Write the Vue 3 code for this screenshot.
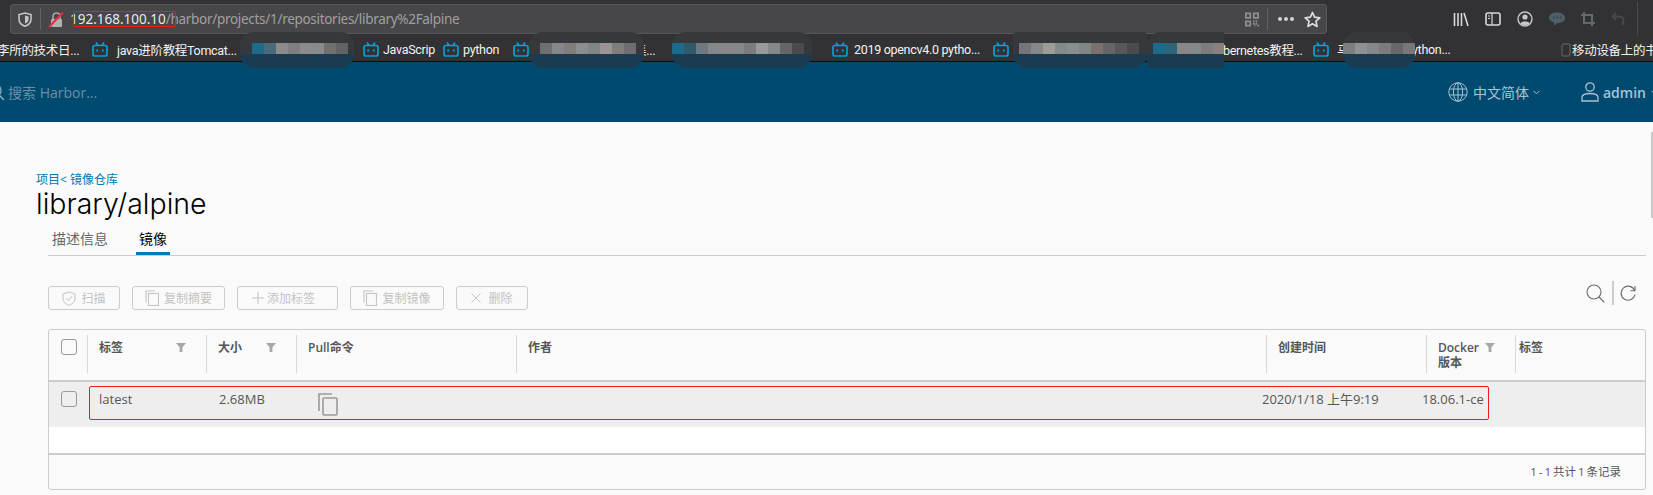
<script setup>
const bookmarks = [
  { width: 92, text: '李所的技术日...', plain: true, shift: true },
  { width: 160, text: 'java进阶教程Tomcat...', gap: 9 },
  { width: 111, text: '' },
  { width: 80, text: 'JavaScrip', gap: 4 },
  { width: 70, text: 'python', gap: 4 },
  { width: 159, text: '', tail: '集...', tailLeft: 121 },
  { width: 160, text: '' },
  { width: 161, text: '2019 opencv4.0 pytho...', gap: 6 },
  { width: 160, text: '' },
  { width: 160, text: '', tail: 'bernetes教程...', tailLeft: 70 },
  { width: 248, text: '马', gap: 8, tail: 'ython...', tailLeft: 99 },
]

const patches = [
  { cls: 'p1', cells: ['#1d6b8c', '#4a6a7c', '#8c8a8a', '#807e82', '#8c8a8a', '#888b8b', '#6f6f6c', '#636366'] },
  { cls: 'p2', cells: ['#6f6f72', '#85888a', '#827c7a', '#8a8e8e', '#808585', '#9c9494', '#7e7e7c', '#716c72'] },
  { cls: 'p3', cells: ['#1d6b8c', '#305a6a', '#6f7a80', '#85888a', '#8a8688', '#85888a', '#7c7c7c', '#989a9a', '#85888a', '#666667', '#4b4b4d'] },
  { cls: 'p4', cells: ['#74747a', '#85888a', '#9c9e94', '#848a88', '#8a8e8e', '#808585', '#7a706e', '#666667', '#58585a', '#4b4b4d'] },
  { cls: 'p5', cells: ['#1d6b8c', '#2c6478', '#8a8688', '#85888a', '#7c7c7c', '#8a8080'] },
  { cls: 'p6', cells: ['#7c7e80', '#8e9292', '#85888a', '#7c7c7c', '#68686a', '#78787a'] },
]

const buttons = [
  { label: '扫描', icon: 'shield', cls: 'w-scan' },
  { label: '复制摘要', icon: 'copy', cls: 'w-copy' },
  { label: '添加标签', icon: 'plus', cls: 'w-plus' },
  { label: '复制镜像', icon: 'copy', cls: 'w-image' },
  { label: '删除', icon: 'close', cls: 'w-del' },
]
</script>

<template>
  <div class="page">
    <div class="browser">
      <div class="toolbar">
        <div class="urlbar">
          <svg class="shield" width="14" height="15" viewBox="0 0 14 15">
            <path d="M7 1 L13 2.5 V7 C13 11 10 13.2 7 14.2 C4 13.2 1 11 1 7 V2.5 Z" fill="none" stroke="#c4c4c6" stroke-width="1.6" />
            <path d="M7 3.5 L10.6 4.5 V7.2 C10.6 9.4 9 10.8 7 11.6 Z" fill="#c4c4c6" />
          </svg>
          <span class="bar-sep"></span>
          <svg class="lock" width="17" height="17" viewBox="0 0 17 17">
            <path d="M5 8 V5.5 C5 3 6.5 2 8.5 2 C10.5 2 12 3 12 5.5 V8" fill="none" stroke="#a8a8aa" stroke-width="1.6" />
            <rect x="3" y="8" width="11" height="8" rx="1" fill="#b0b0b2" />
            <path d="M1 16 L15 1.5" stroke="#ec2a46" stroke-width="2" />
          </svg>
          <span class="url"><span class="host">192.168.100.10</span>/harbor/projects/1/repositories/library%2Falpine</span>
          <span class="host-mark"></span>
          <div class="bar-right">
            <svg width="14" height="15" viewBox="0 0 16 16" fill="#8e8e90">
              <path d="M0 0h7v7H0z M2 2v3h3V2z M9 0h7v7H9z M11 2v3h3V2z M0 9h7v7H0z M2 11v3h3v-3z" fill-rule="evenodd" />
              <path d="M9 9h2v2H9z M12 9h2v2h-2z M9 12h2v2H9z M12 12h2v2h-2z M14 14h2v2h-2z M11 14h1v2h-1z" />
            </svg>
            <span class="bar-sep"></span>
            <span class="dots"><i></i><i></i><i></i></span>
            <svg width="17" height="17" viewBox="0 0 17 17">
              <path d="M8.5 1.5 L10.6 6.2 L15.8 6.8 L12 10.2 L13 15.4 L8.5 12.8 L4 15.4 L5 10.2 L1.2 6.8 L6.4 6.2 Z" fill="none" stroke="#dcdcde" stroke-width="1.7" stroke-linejoin="round" />
            </svg>
          </div>
        </div>
        <div class="tools">
          <svg width="16" height="15" viewBox="0 0 16 15" stroke="#d8d8da" stroke-width="1.6" fill="none">
            <path d="M1.5 1v13 M5 1v13 M8.5 1v13 M11 1l4 13" />
          </svg>
          <svg width="16" height="14" viewBox="0 0 16 14" fill="none" stroke="#d8d8da" stroke-width="1.6">
            <rect x="1" y="1" width="14" height="12" rx="2" />
            <path d="M7 1v12 M3 4h2 M3 6.5h2" stroke-width="1.2" />
          </svg>
          <svg width="16" height="16" viewBox="0 0 16 16">
            <circle cx="8" cy="8" r="7" fill="none" stroke="#c8c8ca" stroke-width="1.4" />
            <circle cx="8" cy="6" r="2.6" fill="#c8c8ca" />
            <path d="M3.4 12.4 C4.5 10 11.5 10 12.6 12.4 C11 14.4 5 14.4 3.4 12.4 Z" fill="#c8c8ca" />
          </svg>
          <svg width="16" height="14" viewBox="0 0 16 14">
            <path d="M8 0.5 C12.4 0.5 16 2.6 16 6 C16 9.2 12.6 11 8.6 11 L5 13.8 L5.2 10.6 C2 9.8 0 8.2 0 6 C0 2.6 3.6 0.5 8 0.5 Z" fill="#4d5f6b" />
            <path d="M4 5.5h1.5 M7.5 5.5H9 M11 5.5h1.5" stroke="#34383c" stroke-width="1.4" />
          </svg>
          <svg width="14" height="14" viewBox="0 0 14 14" fill="none" stroke="#5f6a72" stroke-width="2">
            <path d="M0 3h11v11 M3 0v11h11" />
          </svg>
          <svg width="14" height="14" viewBox="0 0 14 14" fill="none" stroke="#46494c" stroke-width="2">
            <path d="M5 1 L1.5 4.6 L5 8 M1.5 4.6 H8 C11 4.6 12.5 6.5 12.5 9 C12.5 10.5 12 12 11 13" />
          </svg>
          <span class="tool-sep"></span>
        </div>
      </div>
      <div class="bookmarks">
        <div
          v-for="(b, i) in bookmarks"
          :key="i"
          class="bookmark"
          :class="{ shifted: b.shift }"
          :style="{ width: b.width + 'px', gap: (b.gap || 8) + 'px' }"
        >
          <svg v-if="!b.plain" class="tv" width="16" height="15" viewBox="0 0 16 15" fill="none" stroke="#00a1d6" stroke-width="1.7">
            <rect x="1" y="3.5" width="14" height="10.5" rx="2" />
            <path d="M4 0.5 L6 3.5 M12 0.5 L10 3.5" />
            <path d="M5.2 7.5v2 M10.8 7.5v2" stroke-width="1.8" />
          </svg>
          <span>{{ b.text }}</span>
          <span v-if="b.tail" class="tail" :style="{ left: b.tailLeft + 'px' }">{{ b.tail }}</span>
        </div>
        <div class="bookmark mobile">
          <svg width="10" height="14" viewBox="0 0 10 14" fill="none" stroke="#55585c" stroke-width="1.4">
            <rect x="1" y="1" width="8" height="12" rx="1.5" />
          </svg>
          <span>移动设备上的书签</span>
        </div>
      </div>
    </div>

    <header class="topnav">
      <div class="search">
        <svg class="search-icon" width="18" height="18" viewBox="0 0 18 18" fill="none" stroke="#8fb0c4" stroke-width="1.3">
          <circle cx="7.5" cy="7.5" r="6.5" />
          <path d="M12.3 12.3 L17 17" />
        </svg>
        <span>搜索 Harbor...</span>
      </div>
      <div class="nav-right">
        <div class="nav-item lang">
          <svg width="20" height="20" viewBox="0 0 20 20" fill="none" stroke="#a8c3d3" stroke-width="1">
            <circle cx="10" cy="10" r="9.2" />
            <ellipse cx="10" cy="10" rx="4.6" ry="9.2" />
            <path d="M10 0.8v18.4 M1 7h18 M1 13h18" />
          </svg>
          <span>中文简体</span>
          <svg class="chev" width="7" height="5" viewBox="0 0 7 5" fill="none" stroke="#a8c3d3">
            <path d="M0.5 0.8 L3.5 3.8 L6.5 0.8" />
          </svg>
        </div>
        <div class="nav-item user">
          <svg width="18" height="20" viewBox="0 0 18 20" fill="none" stroke="#a8c3d3" stroke-width="1.3">
            <circle cx="9" cy="5" r="4.2" />
            <path d="M1 19 V15.5 C1 12.8 5 11.5 9 11.5 C13 11.5 17 12.8 17 15.5 V19 Z" />
          </svg>
          <span class="admin">admin</span>
          <svg class="chev" width="7" height="5" viewBox="0 0 7 5" fill="none" stroke="#a8c3d3">
            <path d="M0.5 0.8 L3.5 3.8 L6.5 0.8" />
          </svg>
        </div>
      </div>
    </header>

    <main class="content">
      <div class="crumb">项目&lt; 镜像仓库</div>
      <h1 class="title">library/alpine</h1>
      <div class="tabs">
        <span class="tab">描述信息</span>
        <span class="tab active">镜像</span>
      </div>

      <div class="actions">
        <div class="buttons">
          <button v-for="btn in buttons" :key="btn.label" class="btn" :class="btn.cls">
            <svg v-if="btn.icon === 'shield'" width="14" height="15" viewBox="0 0 14 15" fill="none" stroke="#c4c4c4">
              <path d="M7 1 L13 3 V8 C13 11 10 13 7 14.4 C4 13 1 11 1 8 V3 Z" />
              <path d="M4.4 7.4 L6.4 9.6 L10 5.2" />
            </svg>
            <svg v-if="btn.icon === 'copy'" width="14" height="16" viewBox="0 0 14 16" fill="none" stroke="#c4c4c4" stroke-width="1.1">
              <path d="M1 12.5 V1 H10" />
              <rect x="3.5" y="3.5" width="10" height="12" />
            </svg>
            <svg v-if="btn.icon === 'plus'" width="12" height="12" viewBox="0 0 12 12" fill="none" stroke="#c4c4c4" stroke-width="1.1">
              <path d="M6 0v12 M0 6h12" />
            </svg>
            <svg v-if="btn.icon === 'close'" width="10" height="10" viewBox="0 0 10 10" fill="none" stroke="#c4c4c4" stroke-width="1">
              <path d="M0.5 0.5 L9.5 9.5 M9.5 0.5 L0.5 9.5" />
            </svg>
            <span>{{ btn.label }}</span>
          </button>
        </div>
        <div class="filters">
          <svg width="19" height="19" viewBox="0 0 19 19" fill="none" stroke="#6a6a6a" stroke-width="1.1">
            <circle cx="8" cy="8" r="7" />
            <path d="M13 13 L18.4 18.4" />
          </svg>
          <span class="filter-sep"></span>
          <svg width="16" height="17" viewBox="0 0 16 17" fill="none" stroke="#6a6a6a" stroke-width="1.1">
            <path d="M14.6 5.5 A7 7 0 1 0 15 9.5" />
            <path d="M15 1 V5.8 H10.4" />
          </svg>
        </div>
      </div>

      <div class="grid">
        <div class="grid-head">
          <div class="cell check"><span class="box"></span></div>
          <div class="cell sep">标签<svg class="funnel" width="10" height="9" viewBox="0 0 10 9"><path d="M0 0h10L6.4 4.2V9H3.6V4.2Z" fill="#a6a6a6" /></svg></div>
          <div class="cell sep">大小<svg class="funnel" width="10" height="9" viewBox="0 0 10 9"><path d="M0 0h10L6.4 4.2V9H3.6V4.2Z" fill="#a6a6a6" /></svg></div>
          <div class="cell sep">Pull命令</div>
          <div class="cell sep">作者</div>
          <div class="cell sep">创建时间</div>
          <div class="cell sep"><span>Docker<br />版本</span><svg class="funnel" width="10" height="9" viewBox="0 0 10 9"><path d="M0 0h10L6.4 4.2V9H3.6V4.2Z" fill="#a6a6a6" /></svg></div>
          <div class="cell sep last">标签</div>
        </div>
        <div class="grid-row">
          <div class="row-check"><span class="box"></span></div>
          <div>latest</div>
          <div>2.68MB</div>
          <div>
            <svg class="copy" width="20" height="23" viewBox="0 0 20 23" fill="none" stroke="#9a9a9a" stroke-width="1.6">
              <path d="M1 18 V1 H14" />
              <rect x="5" y="5" width="14" height="17" rx="1" />
            </svg>
          </div>
          <div>2020/1/18 上午9:19</div>
          <div>18.06.1-ce</div>
          <span class="row-mark"></span>
        </div>
        <div class="grid-empty"></div>
        <div class="grid-foot">1 - 1 共计 1 条记录</div>
      </div>
    </main>

    <div v-for="p in patches" :key="p.cls" class="patch" :class="p.cls">
      <div class="patch-cells">
        <span v-for="(c, j) in p.cells" :key="j" :style="{ background: c }"></span>
      </div>
    </div>
    <span class="edge"></span>
  </div>
</template>

<style>
html, body {
  margin: 0;
  background: #fafafa;
}
</style>

<style scoped>
.page {
  position: relative;
  width: 1653px;
  height: 495px;
  overflow: hidden;
  background: #fafafa;
  font-family: "Open Sans", "Noto Sans CJK SC", sans-serif;
}

.browser {
  background: #323234;
  height: 61px;
  border-bottom: 1px solid #0c0c0d;
  font-family: "Roboto", "Noto Sans CJK SC", sans-serif;
}

.toolbar {
  display: flex;
  height: 38px;
  padding: 4px 0 0 10px;
  box-sizing: border-box;
}

.urlbar {
  position: relative;
  display: flex;
  align-items: center;
  width: 1317px;
  height: 30px;
  box-sizing: border-box;
  background: #474749;
  border: 1px solid #58585a;
  border-radius: 3px;
  padding: 0 5px 0 7px;
}

.bar-sep {
  width: 1px;
  height: 22px;
  background: #636365;
  margin: 0 7px 0 8px;
}

.url {
  margin-left: 5px;
  font-family: "Noto Sans", "Noto Sans CJK SC", sans-serif;
  font-size: 13.5px;
  letter-spacing: -0.3px;
  color: #a0a0a2;
  white-space: nowrap;
}

.host {
  color: #e8e8ea;
  letter-spacing: 0;
}

.host-mark {
  position: absolute;
  left: 62px;
  top: 6px;
  width: 103px;
  height: 16px;
  box-sizing: border-box;
  border: 1px solid #f01c1c;
  border-radius: 2px;
}

.bar-right {
  margin-left: auto;
  display: flex;
  align-items: center;
}

.bar-right .bar-sep {
  margin: 0 10px 0 8px;
}

.dots {
  display: flex;
  gap: 2px;
  margin-right: 10px;
}

.dots i {
  width: 4px;
  height: 4px;
  border-radius: 50%;
  background: #d4d4d6;
}

.tools {
  display: flex;
  align-items: center;
  height: 30px;
  margin-left: 126px;
  gap: 16px;
}

.tool-sep {
  width: 1px;
  height: 34px;
  background: #4a4a4c;
  margin-left: -4px;
}

.bookmarks {
  display: flex;
  align-items: center;
  height: 23px;
  font-size: 12.5px;
  letter-spacing: -0.3px;
  color: #f2f2f2;
  white-space: nowrap;
}

.bookmark {
  position: relative;
  display: flex;
  align-items: center;
  flex: none;
  box-sizing: border-box;
}

.shifted span {
  margin-left: -3px;
}

.tail {
  position: absolute;
}

.mobile {
  gap: 1px;
}

.topnav {
  display: flex;
  align-items: center;
  justify-content: space-between;
  height: 60px;
  background: #004a70;
}

.search {
  position: relative;
  padding-left: 8px;
  font-size: 14px;
  color: #6b90a6;
}

.search-icon {
  position: absolute;
  left: -13px;
  top: 1px;
}

.nav-right {
  display: flex;
  align-items: center;
  color: #a8c3d3;
  font-size: 14px;
}

.nav-item {
  display: flex;
  align-items: center;
}

.lang span {
  margin-left: 5px;
}

.lang .chev {
  margin-left: 4px;
}

.user {
  margin-left: 41px;
  margin-right: -5px;
}

.admin {
  margin-left: 4px;
  font-weight: 600;
}

.user .chev {
  margin-left: 5px;
}

.content {
  padding: 50px 7px 0 48px;
}

.crumb {
  margin-left: -12px;
  height: 15px;
  line-height: 15px;
  font-size: 12px;
  color: #0079b8;
}

.title {
  margin: 0 0 0 -12px;
  height: 34px;
  line-height: 34px;
  font-family: "Inter", sans-serif;
  font-size: 28.5px;
  font-weight: 300;
  color: #000;
}

.tabs {
  display: flex;
  align-items: flex-start;
  height: 33px;
  margin-top: 2px;
  border-bottom: 1px solid #cccccc;
  box-sizing: border-box;
}

.tab {
  box-sizing: border-box;
  height: 32px;
  padding: 6px 3px 0;
  margin-left: 1px;
  font-size: 14px;
  line-height: 20px;
  color: #666;
}

.tab:first-child {
  margin-right: 24px;
}

.tab.active {
  color: #000;
  border-bottom: 3px solid #0079b8;
}

.actions {
  display: flex;
  justify-content: space-between;
  align-items: flex-start;
  height: 24px;
  margin-top: 30px;
  padding-right: 10px;
}

.buttons {
  display: flex;
  gap: 12px;
}

.btn {
  display: flex;
  align-items: center;
  justify-content: center;
  gap: 5px;
  height: 24px;
  padding: 0;
  background: transparent;
  border: 1px solid #cccccc;
  border-radius: 3px;
  color: #c2c2c2;
  font-family: inherit;
  font-size: 12px;
}

.w-scan { width: 72px; }
.w-copy { width: 93px; }
.w-plus { width: 101px; gap: 3px; padding-right: 8px; }
.w-image { width: 94px; }
.w-del { width: 72px; gap: 7px; }

.filters {
  display: flex;
  align-items: center;
  height: 24px;
  margin-top: -5px;
}

.filter-sep {
  width: 2px;
  height: 24px;
  background: #cccccc;
  margin: 0 6px 0 7px;
}

.grid {
  margin-top: 19px;
  height: 161px;
  box-sizing: border-box;
  border: 1px solid #cccccc;
  border-radius: 3px;
  display: flex;
  flex-direction: column;
  font-size: 13px;
  color: #565656;
  overflow: hidden;
}

.grid-head {
  display: grid;
  grid-template-columns: 38px 119px 90px 220px 750px 160px 89px 1fr;
  height: 52px;
  padding-top: 5px;
  box-sizing: border-box;
  border-bottom: 2px solid #cccccc;
  font-size: 12px;
  font-weight: 600;
  line-height: 15px;
  flex: none;
}

.cell {
  display: flex;
  padding: 5px 20px 0 11px;
  height: 38px;
  box-sizing: border-box;
  justify-content: space-between;
}

.sep {
  border-left: 1px solid #d8d8d8;
}

.check {
  padding: 4px 0 0 12px;
}

.last {
  padding-left: 3px;
}

.funnel {
  margin-top: 3px;
  flex: none;
}

.box {
  display: block;
  width: 16px;
  height: 16px;
  box-sizing: border-box;
  border: 1px solid #999;
  border-radius: 3px;
}

.grid-row {
  position: relative;
  display: grid;
  grid-template-columns: 50px 120px 99px 944px 160px 1fr;
  height: 45px;
  background: #eeeeee;
  line-height: 34px;
  white-space: nowrap;
  flex: none;
}

.row-check {
  padding: 9px 0 0 12px;
}

.row-mark {
  position: absolute;
  left: 40px;
  top: 4px;
  width: 1400px;
  height: 34px;
  box-sizing: border-box;
  border: 1px solid #f01c1c;
  border-radius: 2px;
}

.copy {
  margin-top: 11px;
}

.grid-empty {
  height: 28px;
  flex: none;
  background: #fff;
  border-bottom: 2px solid #cccccc;
  box-sizing: border-box;
}

.grid-foot {
  flex: 1;
  text-align: right;
  font-size: 11.5px;
  word-spacing: -1px;
  line-height: 33px;
  padding-right: 24px;
}

.patch {
  position: absolute;
  top: 32px;
  height: 36px;
  border-radius: 14px;
  background: linear-gradient(#36393c 0 22px, #1b3c50 22px 100%);
  overflow: hidden;
}

.patch-cells {
  display: flex;
  height: 11px;
  margin-top: 11px;
  padding-left: 12px;
}

.patch-cells span {
  width: 12px;
  flex: none;
}

.p1 { left: 240px; width: 114px; }
.p2 { left: 529px; width: 115px; }
.p2 .patch-cells { padding-left: 11px; }
.p3 { left: 672px; width: 140px; }
.p3 .patch-cells { padding-left: 0; }
.p4 { left: 1013px; width: 134px; border-radius: 4px 4px 14px 14px; }
.p4 .patch-cells { padding-left: 6px; }
.p5 { left: 1147px; width: 77px; border-radius: 14px 0 0 0; }
.p5 .patch-cells { padding-left: 6px; }
.p6 { left: 1343px; width: 72px; }
.p6 .patch-cells { padding-left: 0; }

.edge {
  position: absolute;
  right: 0;
  top: 132px;
  width: 2px;
  height: 86px;
  background: #c8c8c8;
}
</style>
